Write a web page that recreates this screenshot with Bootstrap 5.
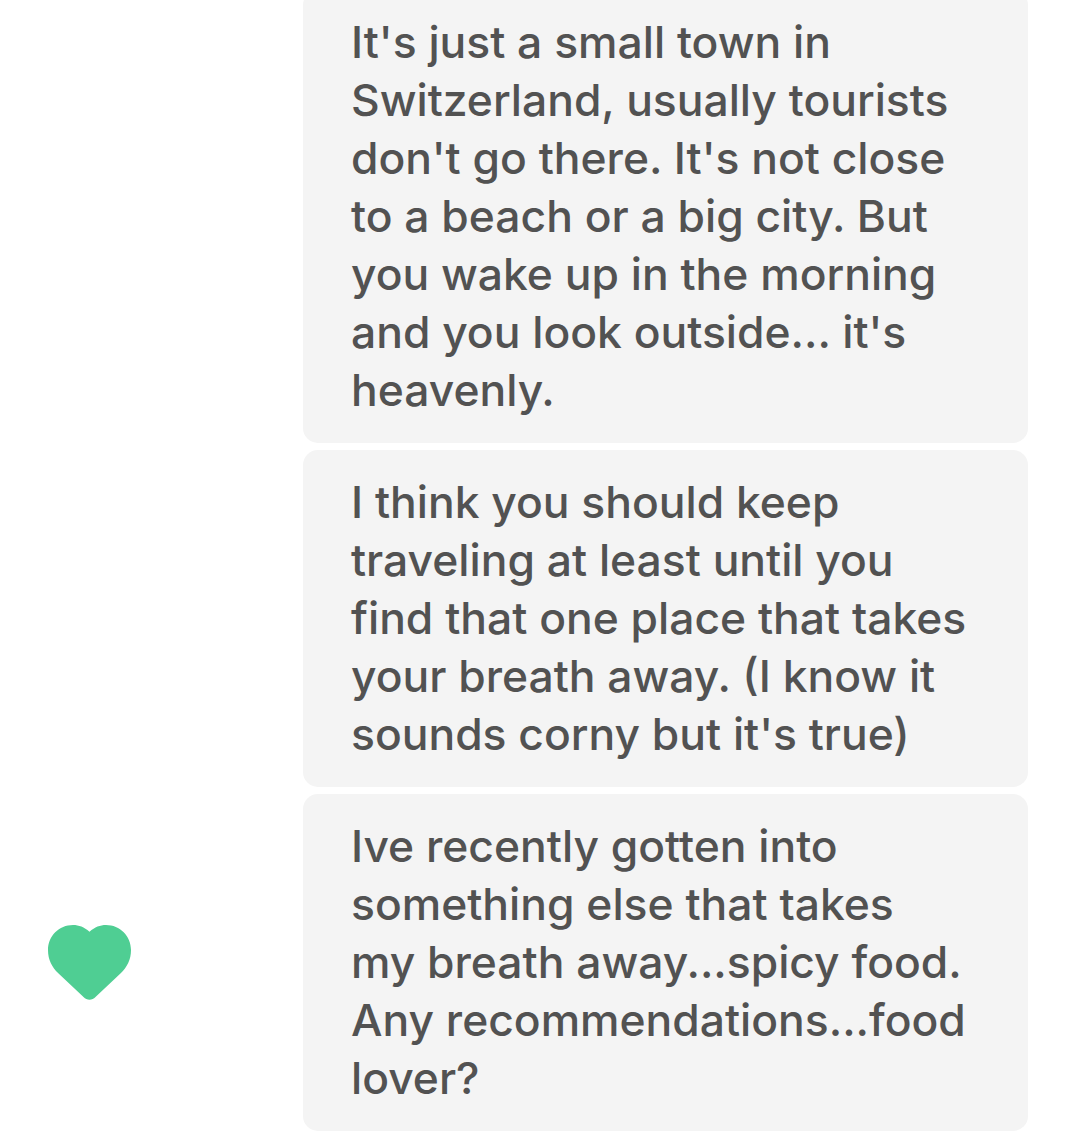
<!DOCTYPE html>
<html lang="en">
<head>
    <meta charset="UTF-8">
    <meta name="viewport" content="width=device-width, initial-scale=1.0">
    <title>Messages</title>
    <link href="https://cdn.jsdelivr.net/npm/bootstrap@5.3.3/dist/css/bootstrap.min.css" rel="stylesheet">
    <style>
        body {
            background-color: #fff;
            overflow: hidden;
        }
        .msg-list {
            margin-top: -10px;
            gap: 7px;
        }
        .msg-row {
            padding-right: 52px;
        }
        .msg-bubble {
            width: 725px;
            padding: 23px 48px 24px;
            background-color: #f4f4f4;
            border-radius: 15px;
            color: #525252;
            font-family: "Inter", "Liberation Sans", sans-serif;
            font-size: 44.4px;
            font-weight: 550;
            line-height: 58px;
            white-space: nowrap;
        }
        .like-heart {
            width: 83px;
            height: 75px;
            margin-left: 48px;
            fill: #4fce93;
        }
    </style>
</head>
<body>

    <div class="msg-list d-flex flex-column">
        <div class="msg-row d-flex justify-content-end">
            <div class="msg-bubble">It's just a small town in<br>Switzerland, usually tourists<br>don't go there. It's not close<br>to a beach or a big city. But<br>you wake up in the morning<br>and you look outside... it's<br>heavenly.</div>
        </div>
        <div class="msg-row d-flex justify-content-end">
            <div class="msg-bubble">I think you should keep<br>traveling at least until you<br>find that one place that takes<br>your breath away. (I know it<br>sounds corny but it's true)</div>
        </div>
        <div class="msg-row d-flex justify-content-between align-items-center">
            <svg class="like-heart" viewBox="0 0 83 75" aria-label="Liked">
                <path d="M41.5 6.7C36 2 31 0 25 0 11 0 0 11 0 25c0 10 4 17 10.3 23.3L35.5 72c3.5 3.5 8.5 3.5 12 0l25.2-23.7C79 42 83 35 83 25 83 11 72 0 58 0c-6 0-11 2-16.5 6.7Z"/>
            </svg>
            <div class="msg-bubble">Ive recently gotten into<br>something else that takes<br>my breath away...spicy food.<br>Any recommendations...food<br>lover?</div>
        </div>
    </div>

    <script src="https://cdn.jsdelivr.net/npm/bootstrap@5.3.3/dist/js/bootstrap.bundle.min.js"></script>
</body>
</html>
